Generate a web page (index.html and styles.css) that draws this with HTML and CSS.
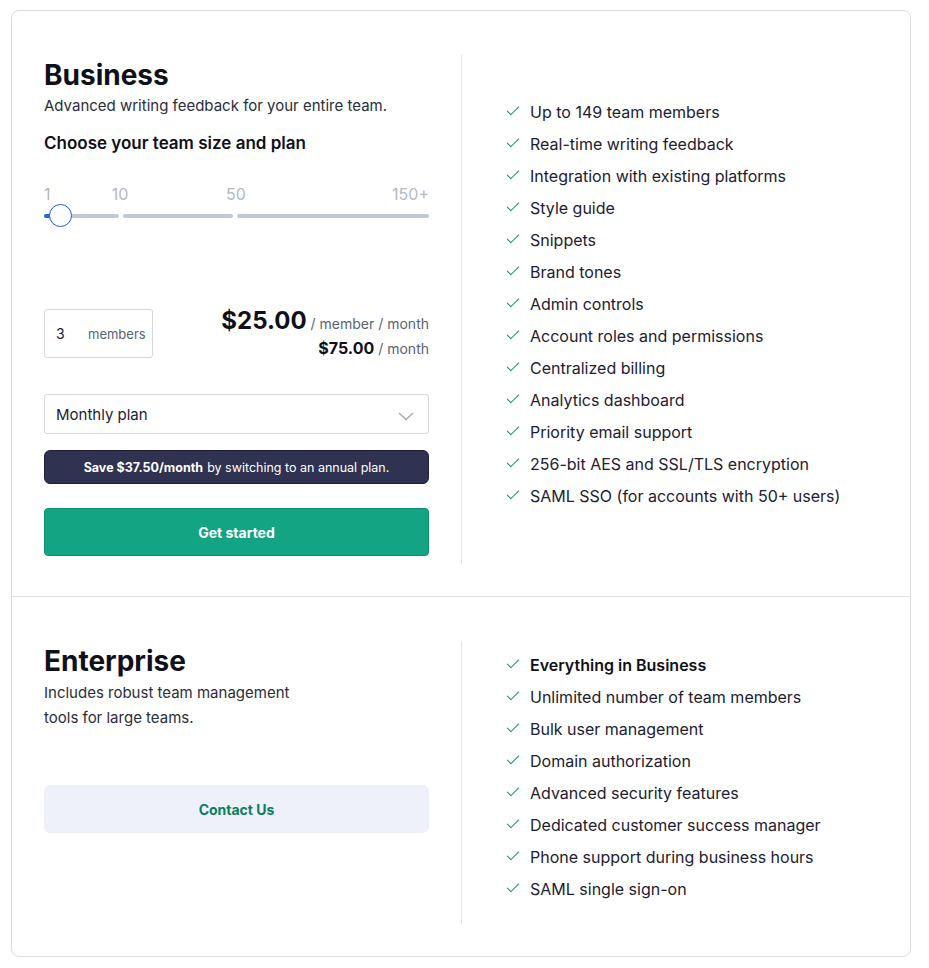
FILE: index.html
```html
<!DOCTYPE html>
<html lang="en">
  <head>
    <meta charset="UTF-8" />
    <meta name="viewport" content="width=device-width, initial-scale=1.0" />
    <title>Plans</title>
    <link rel="stylesheet" href="styles.css">
  </head>
  <body>
    <div class="plans-card">
      <div class="plan-row">
        <div class="plan-left">
          <h2 class="plan-title">Business</h2>
          <p class="plan-desc">Advanced writing feedback for your entire team.</p>
          <h3 class="plan-sub">Choose your team size and plan</h3>

          <div class="slider">
            <div class="slider-labels">
              <span class="tick tick-1">1</span>
              <span class="tick tick-10">10</span>
              <span class="tick tick-50">50</span>
              <span class="tick tick-150">150+</span>
            </div>
            <div class="slider-track">
              <div class="seg seg-a"><div class="seg-fill"></div></div>
              <div class="seg seg-b"></div>
              <div class="seg seg-c"></div>
              <div class="thumb"></div>
            </div>
          </div>

          <div class="price-row">
            <div class="members-box">
              <span class="members-num">3</span>
              <span class="members-label">members</span>
            </div>
            <div class="price">
              <div class="price-main"><strong>$25.00</strong> / member / month</div>
              <div class="price-total"><strong>$75.00</strong> / month</div>
            </div>
          </div>

          <div class="select">
            <span>Monthly plan</span>
            <svg class="chevron" width="16" height="9" viewBox="0 0 16 9">
              <path d="M1 1l7 6.5L15 1" fill="none" stroke="#a3a7b6" stroke-width="1.3" />
            </svg>
          </div>

          <div class="save-banner"><strong>Save $37.50/month</strong> by switching to an annual plan.</div>

          <button class="btn-primary">Get started</button>
        </div>

        <div class="plan-right">
          <ul class="features">
            <li>Up to 149 team members</li>
            <li>Real-time writing feedback</li>
            <li>Integration with existing platforms</li>
            <li>Style guide</li>
            <li>Snippets</li>
            <li>Brand tones</li>
            <li>Admin controls</li>
            <li>Account roles and permissions</li>
            <li>Centralized billing</li>
            <li>Analytics dashboard</li>
            <li>Priority email support</li>
            <li>256-bit AES and SSL/TLS encryption</li>
            <li>SAML SSO (for accounts with 50+ users)</li>
          </ul>
        </div>
      </div>

      <div class="plan-row plan-row-enterprise">
        <div class="plan-left">
          <h2 class="plan-title">Enterprise</h2>
          <p class="plan-desc plan-desc-narrow">Includes robust team management tools for large teams.</p>
          <button class="btn-secondary">Contact Us</button>
        </div>

        <div class="plan-right">
          <ul class="features">
            <li class="strong">Everything in Business</li>
            <li>Unlimited number of team members</li>
            <li>Bulk user management</li>
            <li>Domain authorization</li>
            <li>Advanced security features</li>
            <li>Dedicated customer success manager</li>
            <li>Phone support during business hours</li>
            <li>SAML single sign-on</li>
          </ul>
        </div>
      </div>
    </div>
  </body>
</html>
```

FILE: styles.css
```css
body {
  margin: 0;
  padding: 10px 18px 11px 11px;
  background: #fff;
  font-family: Inter, "Noto Sans", sans-serif;
  color: #1d2031;
}

.plans-card {
  border: 1px solid #dcdde3;
  border-radius: 8px;
}

.plan-row {
  display: flex;
  padding: 44px 0 32px 32px;
}

.plan-row + .plan-row {
  border-top: 1px solid #dcdde6;
}

.plan-row-enterprise {
  min-height: 283px;
}

.plan-left {
  width: 385px;
  padding-right: 32px;
  border-right: 1px solid #e4e5eb;
  display: flex;
  flex-direction: column;
}

.plan-right {
  flex: 1;
  padding-left: 44px;
  display: flex;
  align-items: center;
}

.plan-title {
  margin: 0;
  font-size: 28px;
  line-height: 40px;
  font-weight: 700;
  color: #0e101a;
}

.plan-desc {
  margin: 0;
  font-size: 15px;
  line-height: 22px;
  color: #2a2d3c;
}

.plan-desc-narrow {
  max-width: 260px;
  line-height: 25px;
  margin-top: -1px;
}

.plan-sub {
  margin: 14px 0 0;
  font-size: 17px;
  line-height: 24px;
  font-weight: 600;
  color: #0e101a;
}

/* slider */
.slider {
  margin-top: 29px;
}

.slider-labels {
  position: relative;
  height: 20px;
  font-size: 16px;
  line-height: 20px;
  color: #b3b7c7;
}

.tick {
  position: absolute;
  top: 0;
}

.tick-1 { left: 0; }
.tick-10 { left: 76px; transform: translateX(-50%); }
.tick-50 { left: 192px; transform: translateX(-50%); }
.tick-150 { right: 0; }

.slider-track {
  position: relative;
  display: flex;
  gap: 4px;
  margin-top: 10px;
  height: 4px;
}

.seg {
  height: 4px;
  border-radius: 2px;
  background: #c3c7d9;
}

.seg-a { width: 75px; position: relative; overflow: hidden; }
.seg-b { width: 110px; }
.seg-c { flex: 1; }

.seg-fill {
  width: 10px;
  height: 4px;
  background: #2a62d8;
}

.thumb {
  position: absolute;
  left: 5px;
  top: -10px;
  width: 21px;
  height: 21px;
  border: 1.5px solid #1f5ad3;
  border-radius: 50%;
  background: #fff;
}

/* members + price */
.price-row {
  display: flex;
  justify-content: space-between;
  align-items: flex-start;
  margin-top: 91px;
}

.members-box {
  width: 109px;
  height: 49px;
  box-sizing: border-box;
  border: 1px solid #d6d8e0;
  border-radius: 3px;
  display: flex;
  align-items: center;
  padding-left: 11px;
}

.members-num {
  font-size: 14px;
  color: #1d2031;
  width: 32px;
}

.members-label {
  font-size: 13px;
  color: #5a5f72;
}

.price {
  text-align: right;
  font-size: 14px;
  color: #5a5f72;
}

.price-main {
  line-height: 26px;
  margin-top: -1px;
}

.price-main strong {
  font-size: 24px;
  font-weight: 700;
  color: #0e101a;
}

.price-total {
  line-height: 20px;
  margin-top: 1px;
}

.price-total strong {
  font-size: 16px;
  font-weight: 700;
  color: #0e101a;
}

.select {
  margin-top: 35px;
  height: 40px;
  box-sizing: border-box;
  border: 1px solid #d6d8e0;
  border-radius: 3px;
  padding: 0 14px 0 11px;
  display: flex;
  align-items: center;
  justify-content: space-between;
  font-size: 15px;
  color: #1d2031;
}

.chevron {
  margin-top: 4px;
}

.save-banner {
  margin-top: 16px;
  height: 34px;
  box-sizing: border-box;
  border: 1px solid #1d1f36;
  border-radius: 6px;
  background: #2f3251;
  color: #fff;
  font-size: 12.5px;
  display: flex;
  align-items: center;
  justify-content: center;
}

.save-banner strong {
  font-weight: 700;
  margin-right: 4px;
}

.btn-primary {
  margin-top: 24px;
  margin-bottom: 8px;
  height: 48px;
  border: 1px solid #0c8f6f;
  border-radius: 4px;
  background: #13a583;
  color: #fff;
  font-family: inherit;
  font-size: 14px;
  font-weight: 700;
  cursor: pointer;
}

.btn-secondary {
  margin-top: 55px;
  height: 48px;
  border: none;
  border-radius: 6px;
  background: #eff1fa;
  color: #0b7f5d;
  font-family: inherit;
  font-size: 14px;
  font-weight: 700;
  cursor: pointer;
}

/* feature list */
.features {
  list-style: none;
  margin: 0;
  padding: 0 0 12px;
}

.features li {
  display: flex;
  align-items: center;
  height: 32px;
  font-size: 16px;
  color: #1d2031;
}

.features li::before {
  content: "";
  width: 11px;
  height: 5px;
  margin: 0 11px 5px 1px;
  border-left: 1.7px solid #0e8a69;
  border-bottom: 1.7px solid #0e8a69;
  transform: rotate(-45deg);
}

.features li.strong {
  font-weight: 600;
  color: #0e101a;
}
```
